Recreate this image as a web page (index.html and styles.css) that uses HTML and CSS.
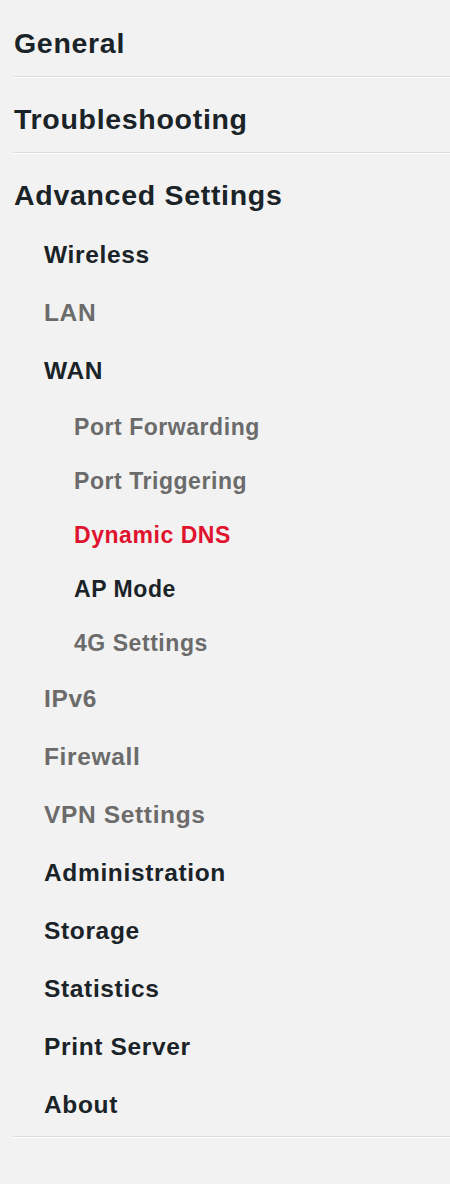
FILE: index.html
```html
<!DOCTYPE html>
<html lang="en">
<head>
<meta charset="utf-8">
<title>Settings Menu</title>
<link rel="stylesheet" href="styles.css">
</head>
<body>
<nav class="menu">
  <div class="section"><a class="top-link" href="#">General</a></div>
  <div class="section"><a class="top-link" href="#">Troubleshooting</a></div>
  <div class="section section-last">
    <a class="top-link top-open" href="#">Advanced Settings</a>
    <ul class="sub">
      <li><a class="sub-link" href="#">Wireless</a></li>
      <li><a class="sub-link muted" href="#">LAN</a></li>
      <li>
        <a class="sub-link" href="#">WAN</a>
        <ul class="subsub">
          <li><a class="subsub-link muted" href="#">Port Forwarding</a></li>
          <li><a class="subsub-link muted" href="#">Port Triggering</a></li>
          <li><a class="subsub-link active" href="#">Dynamic DNS</a></li>
          <li><a class="subsub-link" href="#">AP Mode</a></li>
          <li><a class="subsub-link muted" href="#">4G Settings</a></li>
        </ul>
      </li>
      <li><a class="sub-link muted" href="#">IPv6</a></li>
      <li><a class="sub-link muted" href="#">Firewall</a></li>
      <li><a class="sub-link muted" href="#">VPN Settings</a></li>
      <li><a class="sub-link" href="#">Administration</a></li>
      <li><a class="sub-link" href="#">Storage</a></li>
      <li><a class="sub-link" href="#">Statistics</a></li>
      <li><a class="sub-link" href="#">Print Server</a></li>
      <li><a class="sub-link" href="#">About</a></li>
    </ul>
  </div>
</nav>
</body>
</html>
```
FILE: styles.css
```css
html, body {
  margin: 0;
  padding: 0;
}
body {
  background: #f2f2f2;
  font-family: "Liberation Sans", Arial, Helvetica, sans-serif;
  font-weight: bold;
  color: #1a2327;
  min-height: 1184px;
}
.menu {
  margin-left: 14px;
  padding-top: 1px;
}
.section {
  padding: 26px 0 17px 0;
  border-bottom: 1px solid #d9dddd;
  box-shadow: 0 1px 0 #ffffff;
}
.section-last {
  padding-bottom: 2px;
}
a {
  text-decoration: none;
  color: inherit;
  display: block;
}
.top-link {
  font-size: 28.5px;
  letter-spacing: 0.7px;
  line-height: 32px;
}
.top-open {
  margin-bottom: 15px;
}
ul {
  list-style: none;
  margin: 0;
  padding: 0;
}
.sub-link {
  font-size: 24.5px;
  letter-spacing: 0.65px;
  line-height: 58px;
  padding-left: 30px;
}
.subsub-link {
  font-size: 23px;
  letter-spacing: 0.55px;
  line-height: 54px;
  padding-left: 60px;
}
.muted {
  color: #6b6b6b;
}
.active {
  color: #e0132f;
}
```
